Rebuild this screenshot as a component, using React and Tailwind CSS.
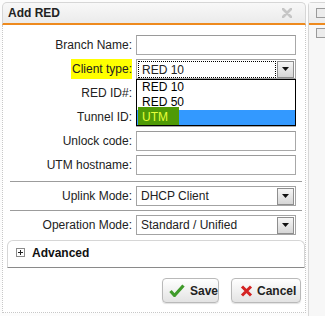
import React from 'react'

const rows = [
  { id: 'branch', label: 'Branch Name:' },
  { id: 'client', label: 'Client type:', select: 'RED 10', highlight: true, focus: true },
  { id: 'redid', label: 'RED ID#:' },
  { id: 'tunnel', label: 'Tunnel ID:' },
  { id: 'unlock', label: 'Unlock code:' },
  { id: 'host', label: 'UTM hostname:' },
]

const options = ['RED 10', 'RED 50', 'UTM']

function Arrow() {
  return (
    <div className="w-[17px] h-[17px] mr-[1px] border border-[#8e8e8e] bg-gradient-to-b from-[#f6f6f6] to-[#d6d6d6] flex items-center justify-center">
      <svg width="7" height="4" viewBox="0 0 7 4">
        <path d="M0 0h7L3.5 4z" fill="#111" />
      </svg>
    </div>
  )
}

function Select({ value, focus, children }) {
  return (
    <div className="relative w-[160px] h-[20px] border border-[#a3a3a3] bg-white flex items-center">
      <div className={`flex-1 h-[17px] ml-[1px] mr-[1px] pl-[3px] leading-[16px] ${focus ? 'border border-dotted border-black' : ''}`}>
        {value}
      </div>
      <Arrow />
      {children}
    </div>
  )
}

function Input() {
  return <div className="w-[160px] h-[20px] border border-[#a8a8a8] border-t-[#9a9a9a] bg-white" />
}

function Row({ label, highlight, children }) {
  return (
    <div className="flex items-center h-[20px]">
      <div className="w-[129px] text-right">
        {highlight ? <span className="bg-[#ffff00] inline-block h-[20px] leading-[20px] pl-[1px]">{label}</span> : label}
      </div>
      <div className="ml-[4px]">{children}</div>
    </div>
  )
}

function Dropdown() {
  return (
    <div className="absolute left-[-1px] top-[19px] w-[160px] border border-black bg-white z-10">
      {options.map((o, i) => (
        <div key={o} className={`relative h-[15px] leading-[15px] pl-[5px] ${i === 2 ? 'bg-[#3399ff]' : ''}`}>
          {i === 2 && <span className="absolute left-[1px] top-[-3px] w-[41px] h-[18px] bg-[#4f9a06]" />}
          <span className={`relative ${i === 2 ? 'text-[#e6ff3a]' : 'text-black'}`}>{o}</span>
        </div>
      ))}
    </div>
  )
}

export default function App() {
  return (
    <div className="w-[325px] h-[316px] bg-[#fcfcfc] flex pt-[2px] pl-[2px] overflow-hidden font-['Liberation_Sans',Arial,sans-serif] text-[12px] text-[#222]">
      <div className="w-[309px] h-[311px] flex flex-col">
        <div className="h-[23px] flex items-center justify-between pl-[5px] pr-[13px] border-t border-l border-r border-[#d6d6d6] border-b-2 border-b-[#ee8a1e] rounded-t-[5px] bg-gradient-to-b from-[#f8f8f8] to-[#ebebeb]">
          <span className="font-bold text-[12px] text-[#222]">Add RED</span>
          <svg width="10" height="10" viewBox="0 0 10 10">
            <path d="M1 1l8 8M9 1L1 9" stroke="#c6c6c6" strokeWidth="2.6" strokeLinecap="round" />
          </svg>
        </div>

        <div className="flex-1 flex flex-col bg-white border-l border-r border-b border-dotted border-[#c8c8c8] pt-[10px]">
          <div className="flex flex-col gap-[4px]">
            {rows.map((r) => (
              <Row key={r.id} label={r.label} highlight={r.highlight}>
                {r.select ? (
                  <Select value={r.select} focus={r.focus}>
                    <Dropdown />
                  </Select>
                ) : (
                  <Input />
                )}
              </Row>
            ))}
          </div>

          <div className="ml-[7px] w-[292px] h-px bg-[#9c9c9c] mt-[6px] mb-[4px]" />
          <Row label="Uplink Mode:">
            <Select value="DHCP Client" />
          </Row>
          <div className="ml-[7px] w-[292px] h-px bg-[#9c9c9c] mt-[4px] mb-[4px]" />
          <Row label="Operation Mode:">
            <Select value="Standard / Unified" />
          </Row>

          <div className="mt-[5px] ml-[4px] w-[298px] h-[28px] border border-[#d6d6d6] border-b-[#8a8a8a] border-b-dotted rounded-t-[6px] bg-white flex items-start pt-[6px] pl-[8px]">
            <div className="w-[9px] h-[9px] border border-[#8a8a8a] bg-white flex items-center justify-center mt-[1px]">
              <svg width="5" height="5" viewBox="0 0 5 5">
                <path d="M0 2.5h5M2.5 0v5" stroke="#222" strokeWidth="1" />
              </svg>
            </div>
            <span className="ml-[7px] font-bold leading-[12px] text-[#111]">Advanced</span>
          </div>

          <div className="mt-[10px] pr-[4px] flex justify-end gap-[12px]">
            <button className="w-[57px] h-[25px] border border-[#b9b9b9] rounded-[4px] bg-gradient-to-b from-white to-[#e3e3e3] shadow-[0_1px_1px_rgba(0,0,0,0.12)] flex items-center pl-[6px] gap-[5px]">
              <svg width="16" height="13" viewBox="0 0 16 13">
                <path d="M1.5 7l4 4.5L14.5 1.5" stroke="#3f9a2a" strokeWidth="3.2" fill="none" strokeLinejoin="round" />
              </svg>
              <span className="font-bold text-[#222]">Save</span>
            </button>
            <button className="w-[70px] h-[25px] border border-[#b9b9b9] rounded-[4px] bg-gradient-to-b from-white to-[#e3e3e3] shadow-[0_1px_1px_rgba(0,0,0,0.12)] flex items-center pl-[8px] gap-[4px]">
              <svg width="13" height="12" viewBox="0 0 13 12">
                <path d="M2 1.5l9 9M11 1.5l-9 9" stroke="#d42323" strokeWidth="3" />
              </svg>
              <span className="font-bold text-[#222]">Cancel</span>
            </button>
          </div>
        </div>
      </div>

      <div className="ml-[2px] flex-1 flex flex-col border-l border-t border-[#d6d6d6] rounded-tl-[4px] bg-[#f7f7f7]">
        <div className="h-[22px] border-b-2 border-[#ee8a1e] bg-gradient-to-b from-[#f8f8f8] to-[#ebebeb] pl-[7px] pt-[5px]">
          <div className="w-[10px] h-[10px] border border-[#9a9a9a] bg-[#ececec]" />
        </div>
        <div className="pl-[7px] pt-[3px]">
          <div className="w-[10px] h-[10px] border border-[#9a9a9a] bg-[#ececec]" />
        </div>
      </div>
    </div>
  )
}
